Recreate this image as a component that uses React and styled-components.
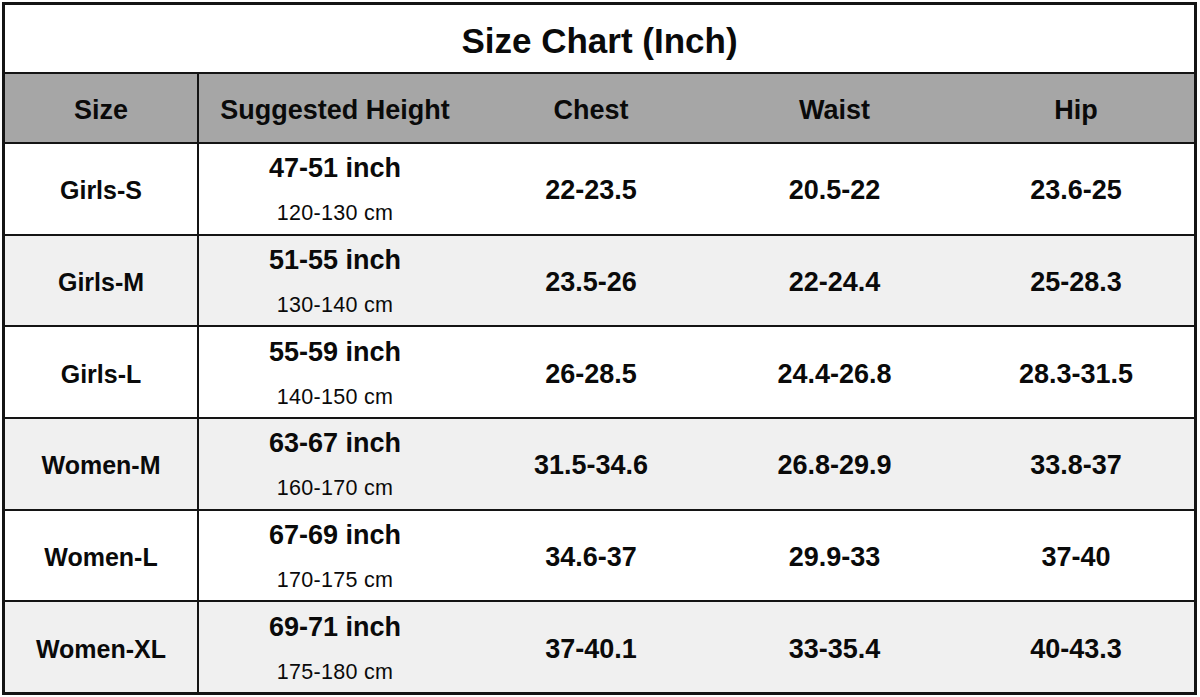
import React from "react";
import styled, { createGlobalStyle } from "styled-components";

const Global = createGlobalStyle`
  html, body { margin: 0; padding: 0; background: #ffffff; }
  body { font-family: "Liberation Sans", Arial, sans-serif; color: #0a0a0a; }
`;

const Page = styled.div`
  padding: 2px;
  width: 1200px;
  height: 697px;
  box-sizing: border-box;
`;

const Frame = styled.div`
  width: 1195px;
  height: 693px;
  box-sizing: border-box;
  border: 3px solid #141414;
  display: flex;
  flex-direction: column;
  background: #ffffff;
`;

const Title = styled.div`
  height: 69px;
  box-sizing: border-box;
  border-bottom: 2px solid #141414;
  display: flex;
  align-items: center;
  justify-content: center;
  font-size: 35px;
  font-weight: 700;
  padding-top: 5px;
`;

const Row = styled.div`
  display: grid;
  grid-template-columns: 194px 272px 240px 247px 1fr;
  box-sizing: border-box;
  border-bottom: ${(p) => (p.$last ? "none" : "2px solid #141414")};
  background: ${(p) => (p.$header ? "#a6a6a6" : p.$shade ? "#f0f0f0" : "#ffffff")};
  height: ${(p) => (p.$header ? "70px" : "auto")};
  flex: ${(p) => (p.$header ? "none" : "1")};
`;

const Cell = styled.div`
  display: flex;
  flex-direction: column;
  align-items: center;
  justify-content: center;
  font-weight: 700;
  font-size: ${(p) => (p.$size ? "25px" : "27px")};
  border-right: ${(p) => (p.$divider ? "2px solid #141414" : "none")};
  padding-top: ${(p) => (p.$header ? "5px" : "4px")};
`;

const Main = styled.div`
  line-height: 30px;
  font-size: 27px;
  font-weight: 700;
`;

const Sub = styled.div`
  margin-top: 15px;
  line-height: 30px;
  font-size: 21.5px;
  font-weight: 400;
  letter-spacing: 0.3px;
`;

const rows = [
  ["Girls-S", "47-51 inch", "120-130 cm", "22-23.5", "20.5-22", "23.6-25"],
  ["Girls-M", "51-55 inch", "130-140 cm", "23.5-26", "22-24.4", "25-28.3"],
  ["Girls-L", "55-59 inch", "140-150 cm", "26-28.5", "24.4-26.8", "28.3-31.5"],
  ["Women-M", "63-67 inch", "160-170 cm", "31.5-34.6", "26.8-29.9", "33.8-37"],
  ["Women-L", "67-69 inch", "170-175 cm", "34.6-37", "29.9-33", "37-40"],
  ["Women-XL", "69-71 inch", "175-180 cm", "37-40.1", "33-35.4", "40-43.3"],
];

export default function App() {
  return (
    <Page>
      <Global />
      <Frame>
        <Title>Size Chart (Inch)</Title>
        <Row $header>
          <Cell $header $divider>Size</Cell>
          <Cell $header>Suggested Height</Cell>
          <Cell $header>Chest</Cell>
          <Cell $header>Waist</Cell>
          <Cell $header>Hip</Cell>
        </Row>
        {rows.map((r, i) => (
          <Row key={r[0]} $shade={i % 2 === 1} $last={i === rows.length - 1}>
            <Cell $size $divider>{r[0]}</Cell>
            <Cell>
              <Main>{r[1]}</Main>
              <Sub>{r[2]}</Sub>
            </Cell>
            <Cell>{r[3]}</Cell>
            <Cell>{r[4]}</Cell>
            <Cell>{r[5]}</Cell>
          </Row>
        ))}
      </Frame>
    </Page>
  );
}
